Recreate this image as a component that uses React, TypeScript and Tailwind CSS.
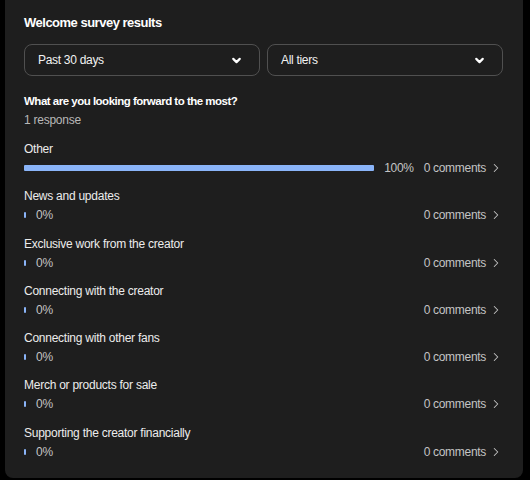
import { ChevronDown, ChevronRight } from 'lucide-react'

const answers = [
  { label: 'Other', pct: 100, comments: 0 },
  { label: 'News and updates', pct: 0, comments: 0 },
  { label: 'Exclusive work from the creator', pct: 0, comments: 0 },
  { label: 'Connecting with the creator', pct: 0, comments: 0 },
  { label: 'Connecting with other fans', pct: 0, comments: 0 },
  { label: 'Merch or products for sale', pct: 0, comments: 0 },
  { label: 'Supporting the creator financially', pct: 0, comments: 0 },
]

function Select({ label }: { label: string }) {
  return (
    <button className="flex-1 h-8 flex items-center justify-between pl-[13px] pr-[16px] border border-[#505050] rounded-lg text-[12px] tracking-[-0.3px] text-[#f2f2f2]">
      {label}
      <ChevronDown size={13} strokeWidth={4} className="text-white" />
    </button>
  )
}

export default function App() {
  return (
    <div className="w-[530px] h-[480px] bg-black font-['Liberation_Sans',Arial,sans-serif] overflow-hidden">
      <div className="ml-[5px] w-[518px] h-[478px] bg-[#1e1e1e] rounded-b-lg px-[19px] pt-[13px]">
        <h2 className="text-[13px] leading-5 font-bold tracking-[-0.5px] text-white">Welcome survey results</h2>

        <div className="flex gap-[7px] mt-[11px] mr-px">
          <Select label="Past 30 days" />
          <Select label="All tiers" />
        </div>

        <p className="mt-[17px] text-[11.5px] leading-4 font-bold tracking-[-0.5px] text-white">What are you looking forward to the most?</p>
        <p className="mt-[3px] text-[12px] leading-4 tracking-[-0.25px] text-[#b8b8b8]">1 response</p>

        <div className="mt-[13px] flex flex-col gap-[12.3px]">
          {answers.map(a => (
            <div key={a.label}>
              <p className="text-[12px] leading-4 tracking-[-0.25px] text-[#ececec]">{a.label}</p>
              <div className="mt-[3px] h-4 flex items-center text-[12px] tracking-[-0.3px] text-[#c4c4c4]">
                <div className="flex-1 flex items-center min-w-0">
                  <div
                    className="h-[6px] min-w-[2px] bg-[#8ab4f8] rounded-[1px] shrink"
                    style={{ width: `${a.pct}%` }}
                  />
                  <span className="ml-[10px] shrink-0">{a.pct}%</span>
                </div>
                <span className="ml-[10px] shrink-0">{a.comments} comments</span>
                <ChevronRight size={14} strokeWidth={1.75} className="ml-[3px] mr-[1px] text-[#c4c4c4]" />
              </div>
            </div>
          ))}
        </div>
      </div>
    </div>
  )
}
